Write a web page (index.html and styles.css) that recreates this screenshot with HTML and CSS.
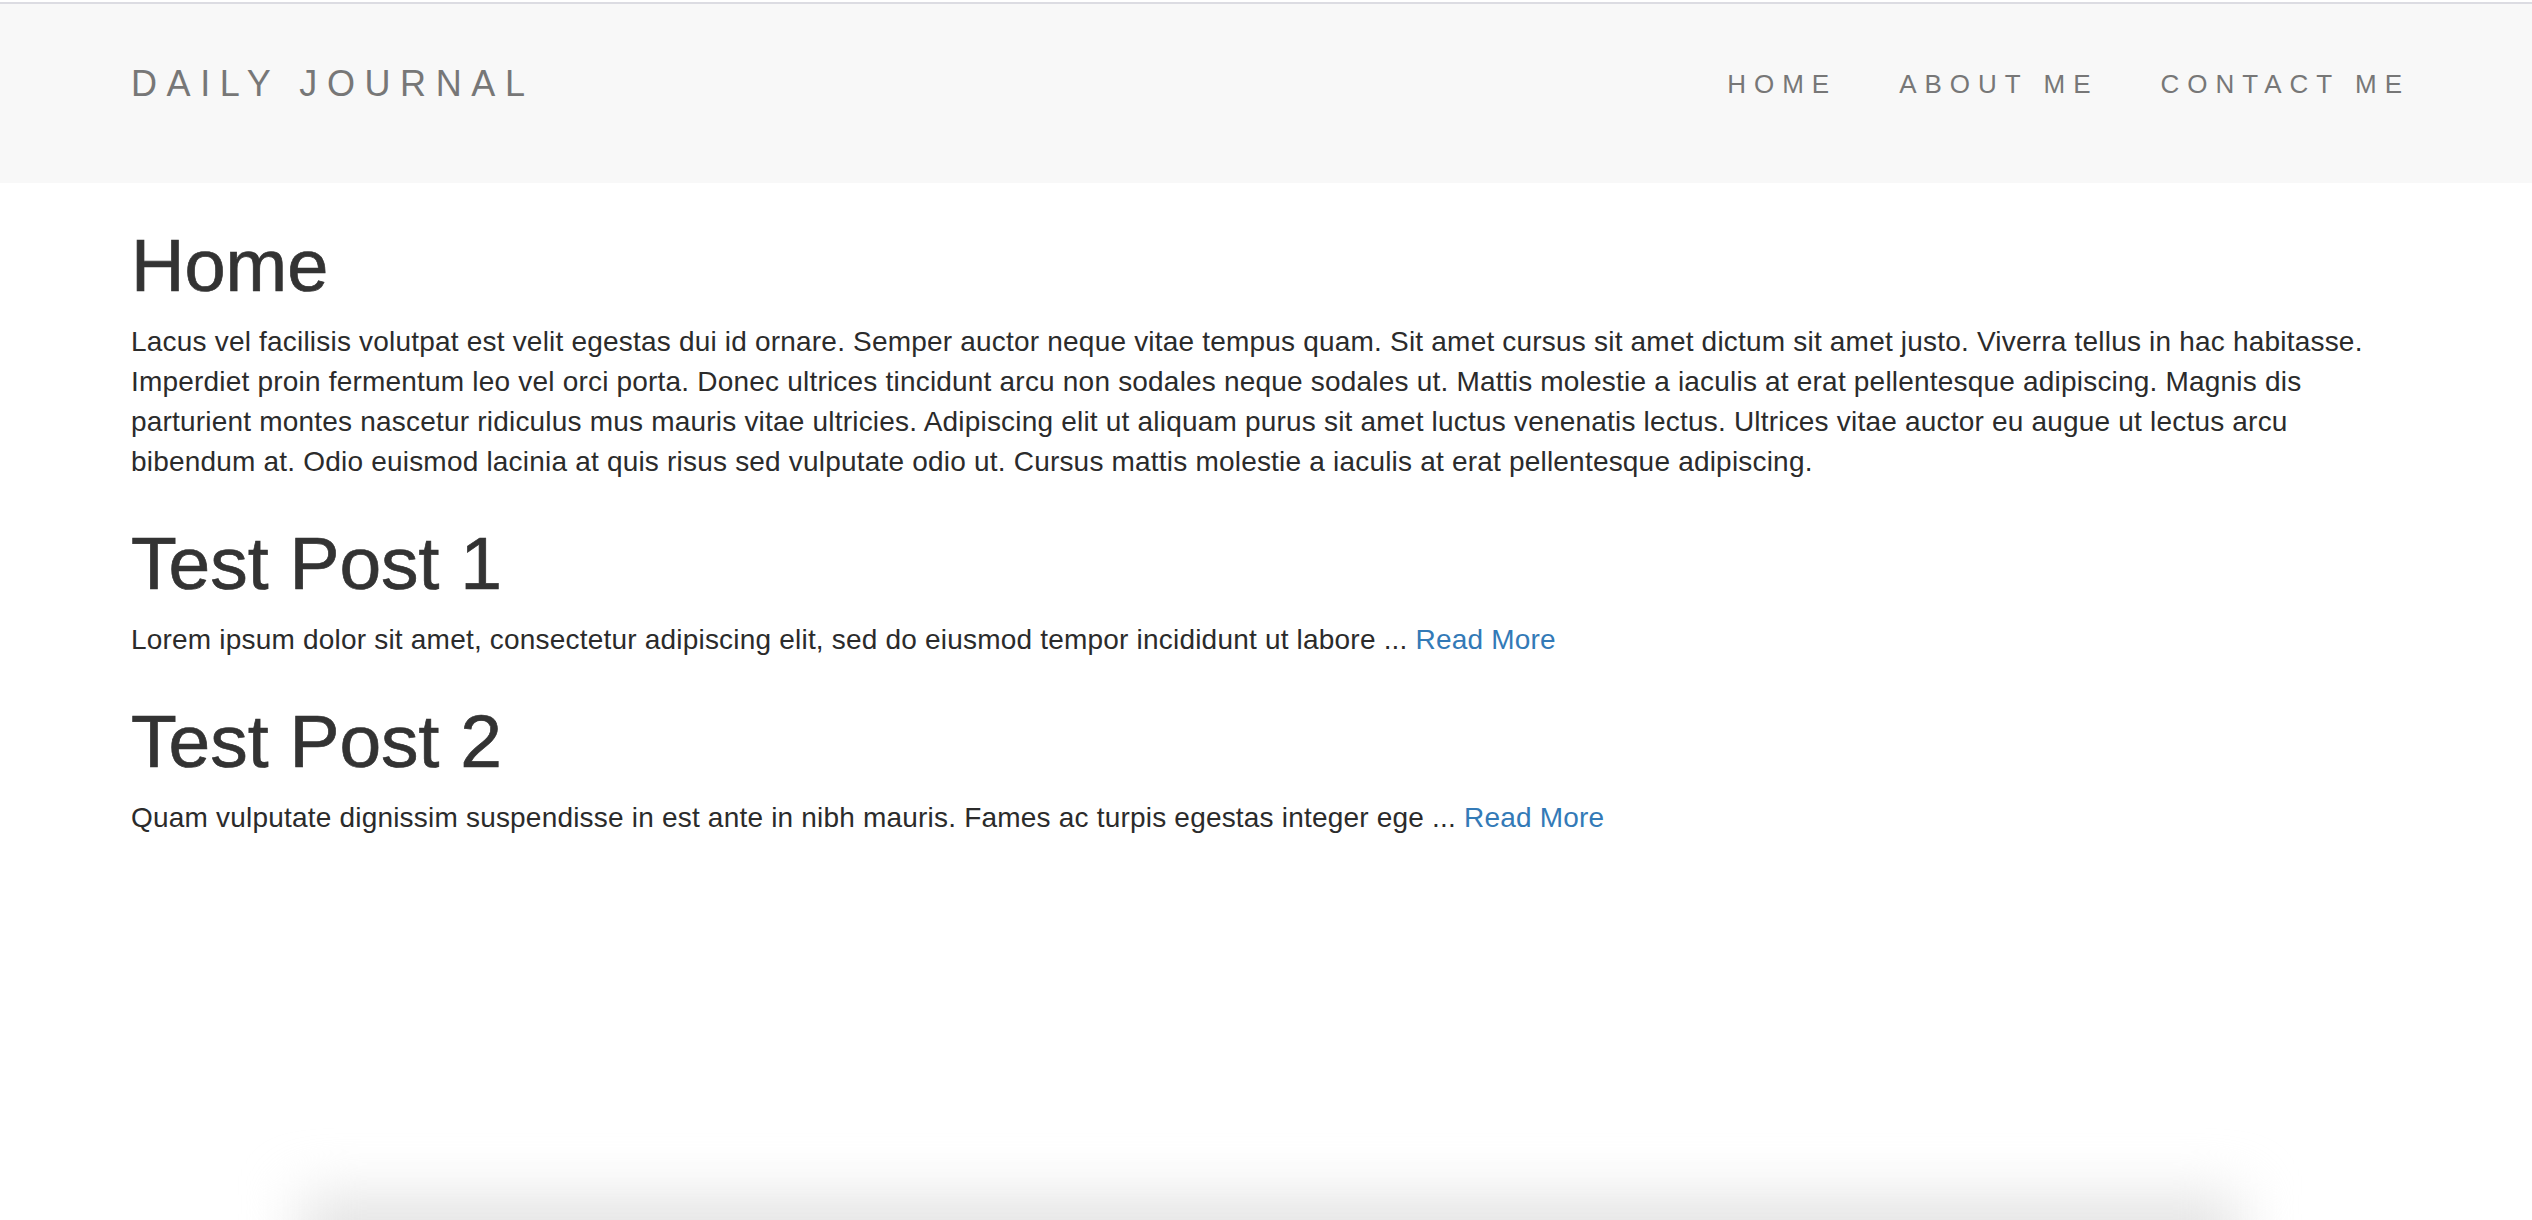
FILE: index.html
```html
<!DOCTYPE html>
<html lang="en">
<head>
<meta charset="utf-8">
<title>Daily Journal</title>
<link rel="stylesheet" href="styles.css">
</head>
<body>
<nav class="navbar">
  <div class="navbar-inner">
    <a class="brand" href="#">DAILY JOURNAL</a>
    <ul class="nav-links">
      <li><a href="#">HOME</a></li>
      <li><a href="#">ABOUT ME</a></li>
      <li><a href="#">CONTACT ME</a></li>
    </ul>
  </div>
</nav>
<main class="content">
  <h1 class="page-title">Home</h1>
  <p>Lacus vel facilisis volutpat est velit egestas dui id ornare. Semper auctor neque vitae tempus quam. Sit amet cursus sit amet dictum sit amet justo. Viverra tellus in hac habitasse. Imperdiet proin fermentum leo vel orci porta. Donec ultrices tincidunt arcu non sodales neque sodales ut. Mattis molestie a iaculis at erat pellentesque adipiscing. Magnis dis parturient montes nascetur ridiculus mus mauris vitae ultricies. Adipiscing elit ut aliquam purus sit amet luctus venenatis lectus. Ultrices vitae auctor eu augue ut lectus arcu bibendum at. Odio euismod lacinia at quis risus sed vulputate odio ut. Cursus mattis molestie a iaculis at erat pellentesque adipiscing.</p>
  <h1 class="post-title">Test Post 1</h1>
  <p>Lorem ipsum dolor sit amet, consectetur adipiscing elit, sed do eiusmod tempor incididunt ut labore ... <a class="more" href="#">Read More</a></p>
  <h1 class="post-title">Test Post 2</h1>
  <p>Quam vulputate dignissim suspendisse in est ante in nibh mauris. Fames ac turpis egestas integer ege ... <a class="more" href="#">Read More</a></p>
</main>
<div class="window-shadow"></div>
</body>
</html>
```
FILE: styles.css
```css
html, body {
  margin: 0;
  padding: 0;
  background: #ffffff;
}
body {
  font-family: "Liberation Sans", Arial, sans-serif;
  color: #333333;
  overflow: hidden;
  height: 1220px;
}
.navbar {
  margin-top: 2px;
  border-top: 2px solid #dcdce2;
  background: #f8f8f8;
  height: 179px;
}
.navbar-inner {
  display: flex;
  justify-content: space-between;
  align-items: flex-start;
  padding: 60px 0 0 131px;
  margin-right: 122px;
}
.brand {
  font-size: 36px;
  line-height: 40px;
  letter-spacing: 9.6px;
  color: #777777;
  text-decoration: none;
}
.nav-links {
  list-style: none;
  margin: 0;
  padding: 0;
  display: flex;
  gap: 62px;
}
.nav-links a {
  font-size: 26px;
  line-height: 40px;
  letter-spacing: 8px;
  color: #777777;
  text-decoration: none;
}
.content {
  padding: 3px 0 0 131px;
  width: 2250px;
}
h1 {
  font-weight: 400;
  color: #333333;
  margin: 40px 0 16px;
  -webkit-text-stroke: 0.7px #333333;
}
.page-title {
  font-size: 74px;
  line-height: 80px;
}
.post-title {
  font-size: 75px;
  line-height: 82px;
}
p {
  font-size: 28px;
  line-height: 40px;
  letter-spacing: 0.2px;
  margin: 0 0 20px;
  color: #2b2b2b;
}
.more {
  color: #337ab7;
  text-decoration: none;
}
.window-shadow {
  position: fixed;
  left: 300px;
  width: 1940px;
  top: 1195px;
  height: 90px;
  background: #e4e4e4;
  filter: blur(28px);
}
```
